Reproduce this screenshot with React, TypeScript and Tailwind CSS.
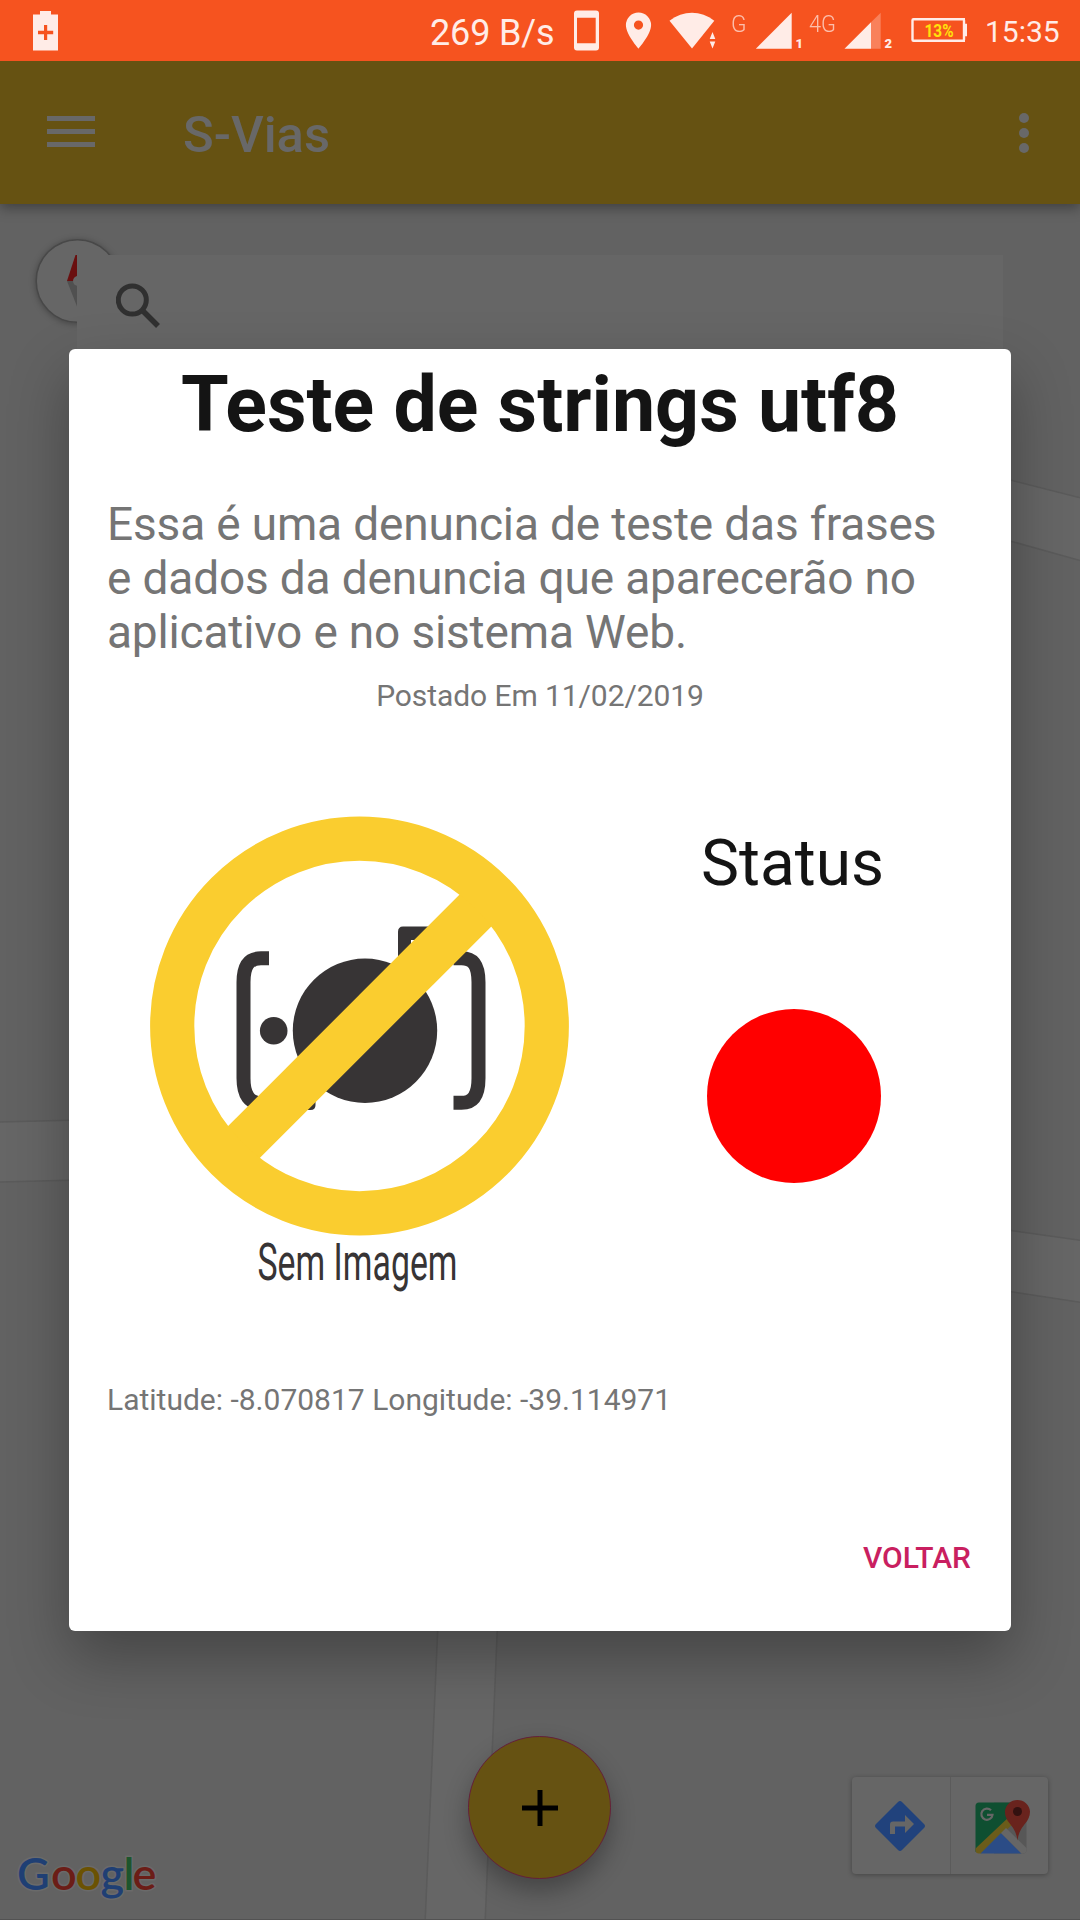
import React from "react";

function StatusBar() {
  return (
    <header className="relative z-20 flex h-[61px] shrink-0 items-center bg-[#f6531f] text-[#ffece7]">
      <svg className="ml-[33px] h-[61px] w-[25px] shrink-0" viewBox="0 0 25 61" fill="currentColor">
        <path fillRule="evenodd" d="M7 11h11v3.400H25V50.500H0V14.400H7zM11 25v5.800H5v3.400h6V40h3.200v-5.800h6v-3.400h-6V25z" />
      </svg>
      <div className="ml-[372px] w-[124px] whitespace-nowrap pt-[6px] text-[36px] leading-[61px] tracking-[-0.15px]">269 B/s</div>
      <svg className="ml-[20px] h-[61px] w-[416px] shrink-0" viewBox="574 0 416 61" fill="currentColor">
        <path fillRule="evenodd" d="M577 10.500h19a3 3 0 0 1 3 3v34a3 3 0 0 1-3 3h-19a3 3 0 0 1-3-3v-34a3 3 0 0 1 3-3zM577 17.700v25.600h18.700V17.700z" />
        <path fillRule="evenodd" d="M638.500 12.500a12.600 12.600 0 0 1 12.600 12.600c0 9.500-12.600 23.600-12.600 23.600s-12.600-14.100-12.600-23.600a12.600 12.600 0 0 1 12.600-12.600zm0 8a4.600 4.600 0 1 0 0 9.200a4.600 4.600 0 0 0 0-9.200z" />
        <path d="M669.500 20.800C683 10 701 10 714.300 20.800L692 48.500z" />
        <path d="M712.500 32l2.800 7h-5.600zM709.700 41.500h5.600l-2.800 7z" />
        <path d="M755.800 48.700L791.700 12.800V48.700z" />
        <path d="M844.500 48.700L871 22.200V48.700z" />
        <path d="M871 22.200L880.700 12.800V48.700H871z" opacity=".3" />
        <rect x="912.500" y="19.300" width="51.500" height="21.400" rx="1" fill="none" stroke="currentColor" strokeWidth="2.400" />
        <path d="M963 18h2v5.800h2v12.400h-2V42h-2z" />
        <text x="731" y="32" fontSize="24" fontFamily="Roboto" fontWeight="300" opacity=".7" textLength="15.500" lengthAdjust="spacingAndGlyphs">G</text>
        <text x="809" y="32" fontSize="24" fontFamily="Roboto" fontWeight="300" opacity=".7" textLength="27" lengthAdjust="spacingAndGlyphs">4G</text>
        <text x="795.500" y="47.500" fontSize="13" fontFamily="Roboto" fontWeight="900">1</text>
        <text x="884.500" y="47.500" fontSize="13" fontFamily="Roboto" fontWeight="900">2</text>
        <text x="924.500" y="37" fontSize="18.500" fontFamily="Roboto" fontWeight="700" fill="#ffe20c" textLength="29" lengthAdjust="spacingAndGlyphs">13%</text>
      </svg>
      <div className="ml-[-5px] whitespace-nowrap pt-[2px] text-[30px] leading-[61px]">15:35</div>
    </header>
  );
}

function AppBar() {
  return (
    <div className="relative z-10 flex h-[143px] shrink-0 items-center bg-[#665212] text-[#686868] shadow-[0_4px_12px_rgba(0,0,0,0.35)]">
      <div className="ml-[47px] flex w-[48px] flex-col gap-[8px] pb-[2px]">
        <div className="h-[5px] bg-[#686868]" />
        <div className="h-[5px] bg-[#686868]" />
        <div className="h-[5px] bg-[#686868]" />
      </div>
      <h1 className="ml-[88px] pt-[4px] text-[50.700px] font-medium leading-[60px]">S-Vias</h1>
      <div className="ml-auto mr-[51px] flex flex-col gap-[5px]">
        <div className="size-[10px] rounded-full bg-[#686868]" />
        <div className="size-[10px] rounded-full bg-[#686868]" />
        <div className="size-[10px] rounded-full bg-[#686868]" />
      </div>
    </div>
  );
}

function MapCanvas() {
  return (
    <svg className="absolute inset-0 size-full" viewBox="0 204 1080 1716" preserveAspectRatio="none">
      <rect y="204" width="1080" height="1716" fill="#626262" />
      <g fill="#666666" stroke="#5b5b5b" strokeWidth="1.500">
        <path d="M-5 1122L400 1112V1172L-5 1182z" />
        <path d="M900 452L1085 499V562L900 510z" />
        <path d="M900 1215L1085 1241V1303L900 1275z" />
        <path d="M439 1600L425 1925H485L498.500 1600z" />
      </g>
      <path d="M0 1919.500H1080" stroke="#525252" />
    </svg>
  );
}

function Compass() {
  return (
    <svg className="absolute left-[31px] top-[30px] size-[90px] drop-shadow-[0_1px_3px_rgba(0,0,0,0.3)]" viewBox="31 234 90 90">
      <circle cx="77.500" cy="281" r="41.300" fill="#666" stroke="#484848" strokeWidth="1.500" />
      <path d="M75.500 255h4L88 281H67z" fill="#6a0f0f" />
      <path d="M78 309L67 281h22z" fill="#505050" />
      <circle cx="78" cy="281" r="5" fill="#666" />
    </svg>
  );
}

function NoImage() {
  return (
    <svg className="h-[480px] w-[420px] shrink-0" viewBox="150 816 420 480">
      <g fill="#373435">
        <circle cx="273.700" cy="1030.700" r="13.800" />
        <circle cx="365" cy="1030.700" r="72.200" />
        <path fillRule="evenodd" d="M398 960V932q0-5.500 5-5.500h40v40h-40zM411 940v20h14v-20z" />
        <path d="M300 1096h12q3.500 0 3.500 5v4q0 5-5 5h-10z" />
      </g>
      <g fill="none" stroke="#373435" strokeWidth="14">
        <path d="M269 958.300h-8c-12 0-17.500 7-17.500 24v96c0 17 6 25 18 25h10" />
        <path d="M453.500 958.300h8c12 0 17 7 17 24v96c0 17-5.500 24.500-17 24.500h-8" />
      </g>
      <path d="M234 1152L486 900" stroke="#facd2f" strokeWidth="45" />
      <circle cx="359.500" cy="1026" r="187.300" fill="none" stroke="#facd2f" strokeWidth="44.200" />
      <text x="257.500" y="1280" fontSize="52" fontFamily="Roboto" fontWeight="400" fill="#373435" textLength="200" lengthAdjust="spacingAndGlyphs">Sem Imagem</text>
    </svg>
  );
}

function Dialog() {
  return (
    <section className="absolute left-[69px] top-[349px] z-30 flex h-[1282px] w-[942px] flex-col rounded-[6px] bg-white text-[#757575] shadow-[0_26px_60px_rgba(0,0,0,0.3)]">
      <h2 className="mt-[11px] text-center text-[77.100px] font-bold leading-[90px] text-[#141414]">Teste de strings utf8</h2>
      <p className="ml-[38px] mt-[47px] whitespace-nowrap text-[46px] leading-[54px] tracking-[-0.16px]">
        Essa é uma denuncia de teste das frases
        <br />e dados da denuncia que aparecerão no
        <br />aplicativo e no sistema Web.
      </p>
      <p className="mt-[19px] text-center text-[30px] leading-[36px] tracking-[-0.08px]">Postado Em 11/02/2019</p>
      <div className="mt-[102px] flex pl-[81px]">
        <NoImage />
        <div className="flex flex-1 flex-col items-center pl-[12px] pr-[8px]">
          <div className="mt-[10px] text-[64px] leading-[76px] text-[#141414]">Status</div>
          <div className="ml-[3px] mt-[107px] size-[174px] rounded-full bg-[#ff0000]" />
        </div>
      </div>
      <p className="ml-[38px] mt-[86px] text-[30px] leading-[36px]">Latitude: -8.070817 Longitude: -39.114971</p>
      <button className="ml-auto mr-[40px] mt-[122px] text-[30px] font-medium leading-[36px] text-[#c91f60]">VOLTAR</button>
    </section>
  );
}

function GoogleLogo() {
  return (
    <svg className="absolute bottom-[8px] left-[10px] h-[70px] w-[155px]" viewBox="10 1842 155 70" fontFamily="Lato" fontWeight="600" fontSize="45" stroke="#6a6a6a" strokeWidth="3" paintOrder="stroke">
      <text x="17" y="1890" fill="#1f3f74">G</text>
      <text x="51" y="1890" fill="#6b1d17">o</text>
      <text x="75.500" y="1890" fill="#6b5203">o</text>
      <text x="100.500" y="1890" fill="#1f3f74">g</text>
      <text x="123.500" y="1890" fill="#1d552c">l</text>
      <text x="132.500" y="1890" fill="#6b1d17">e</text>
    </svg>
  );
}

function MapButtons() {
  return (
    <div className="absolute bottom-[46px] right-[32px] flex h-[97px] w-[196px] rounded-[4px] bg-[#666] shadow-[0_1px_5px_rgba(0,0,0,0.3)]">
      <div className="flex w-[99px] shrink-0 items-center justify-center border-r-[1px] border-[#5b5b5b] pr-[2px]">
        <svg className="size-[50px]" viewBox="0 0 50 50">
          <path d="M23 1q2-2 4 0L49 23q2 2 0 4L27 49q-2 2-4 0L1 27q-2-2 0-4z" fill="#21427c" />
          <path d="M15 33V23.500q0-3 3-3H30V14l9 9-9 9v-6.500H20V33z" fill="#666" />
        </svg>
      </div>
      <div className="flex flex-1 items-center justify-center pl-[4px]">
        <svg className="h-[56px] w-[56px]" viewBox="0 0 56 56">
          <path d="M20 4.500H49q3.500 0 3.500 3.500V52q0 3.500-3.500 3.500H20z" fill="#575757" />
          <path d="M5 4.500H40V20L1.500 54V8q0-3.500 3.500-3.500z" fill="#0f4f31" />
          <path d="M1.500 50.500L36 18 41 24 7 55.500H5q-3.500 0-3.500-3.500z" fill="#6b5c1a" />
          <path d="M6.500 55.500L27 35 47.500 55.500z" fill="#2b4c86" />
          <path d="M27 35L32 30 52.500 50V52q0 3.500-3.500 3.500H47.500z" fill="#666" />
          <path d="M43.500 42.500q-1-9-7-16-5.600-6-5.600-13a12.600 12.600 0 0 1 25.100 0q0 7-5.600 13-6 7-6.900 16z" fill="#69231d" />
          <circle cx="43.500" cy="13.500" r="4.500" fill="#331110" />
          <path d="M17 12.300a5.600 5.600 0 1 0 1.500 4.500H13" fill="none" stroke="#666" strokeWidth="2.200" />
        </svg>
      </div>
    </div>
  );
}

export default function App() {
  return (
    <div className="relative flex h-[1920px] w-[1080px] flex-col overflow-hidden bg-[#626262] font-['Roboto',sans-serif]">
      <StatusBar />
      <AppBar />
      <main className="relative flex-1">
        <MapCanvas />
        <Compass />
        <div className="absolute left-[77px] right-[77px] top-[51px] h-[130px] bg-[#666]">
          <svg className="ml-[39px] mt-[28px] size-[46px]" viewBox="0 0 46 46" fill="none" stroke="#303030">
            <circle cx="16.300" cy="17" r="14" strokeWidth="5" />
            <path d="M26.500 27.500L42 43" strokeWidth="5.500" />
          </svg>
        </div>
        <GoogleLogo />
        <MapButtons />
        <button className="absolute bottom-[41px] left-[468px] flex size-[143px] items-center justify-center rounded-full border border-[#64203a] bg-[#665212] shadow-[0_12px_24px_rgba(0,0,0,0.3)]">
          <svg className="size-[36px]" viewBox="0 0 36 36" stroke="#000" strokeWidth="5">
            <path d="M18 0V36M0 18H36" />
          </svg>
        </button>
      </main>
      <Dialog />
    </div>
  );
}
